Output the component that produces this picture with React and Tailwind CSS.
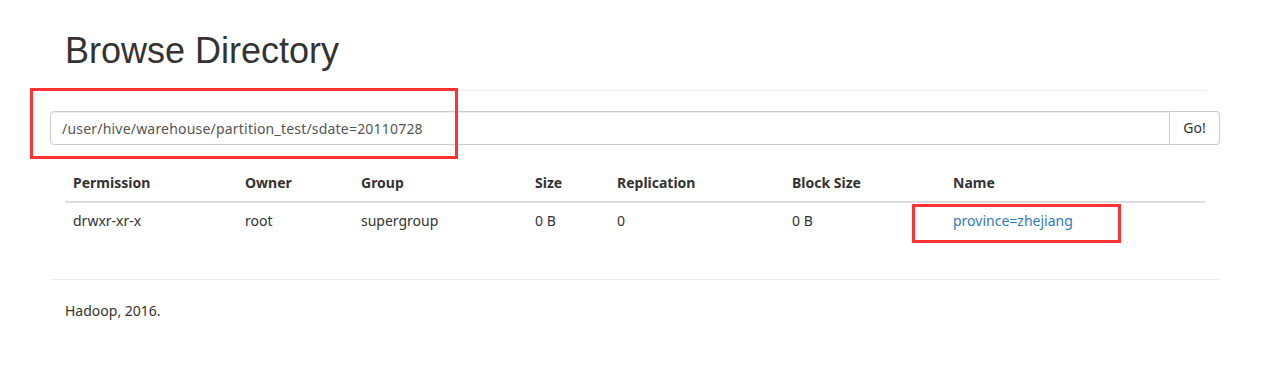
import React from "react";

const cols = [
  { h: "Permission", w: "w-[172px]" },
  { h: "Owner", w: "w-[116px]" },
  { h: "Group", w: "w-[174px]" },
  { h: "Size", w: "w-[82px]" },
  { h: "Replication", w: "w-[175px]" },
  { h: "Block Size", w: "w-[161px]" },
  { h: "Name", w: "" },
];

export default function App() {
  return (
    <div
      className="relative w-[1280px] h-[386px] bg-white text-[#333] text-[14px] leading-[20px]"
      style={{ fontFamily: '"Noto Sans", "Open Sans", sans-serif' }}
    >
      <div className="ml-[50px] w-[1170px]">
        <div className="mx-[15px] pt-[31px] pb-[19px] border-b border-[#eee]">
          <h1
            className="text-[36px] leading-[40px] font-normal text-[#333]"
            style={{ fontFamily: '"Liberation Sans", Arial, sans-serif' }}
          >
            Browse Directory
          </h1>
        </div>
        <div className="mt-[20px] flex h-[34px]">
          <input
            readOnly
            value="/user/hive/warehouse/partition_test/sdate=20110728"
            className="flex-1 h-[34px] border border-[#ccc] rounded-l-[4px] px-[11px] text-[14px] tracking-[0.2px] text-[#555] outline-none shadow-[inset_0_1px_1px_rgba(0,0,0,0.075)]"
            style={{ fontFamily: '"Noto Sans", "Open Sans", sans-serif' }}
          />
          <button className="w-[50px] h-[34px] border border-l-0 border-[#ccc] rounded-r-[4px] bg-white text-[14px] text-[#333]">
            Go!
          </button>
        </div>
        <div className="mx-[15px] mt-[20px]">
          <table className="w-full border-collapse text-left">
            <thead>
              <tr>
                {cols.map((c) => (
                  <th
                    key={c.h}
                    className={`${c.w} px-[8px] py-[8px] font-bold border-b-2 border-[#ddd] align-bottom`}
                  >
                    {c.h}
                  </th>
                ))}
              </tr>
            </thead>
            <tbody>
              <tr>
                <td className="px-[8px] py-[8px]">drwxr-xr-x</td>
                <td className="px-[8px] py-[8px]">root</td>
                <td className="px-[8px] py-[8px]">supergroup</td>
                <td className="px-[8px] py-[8px]">0 B</td>
                <td className="px-[8px] py-[8px]">0</td>
                <td className="px-[8px] py-[8px]">0 B</td>
                <td className="px-[8px] py-[8px]">
                  <a href="#" className="text-[#337ab7]">
                    province=zhejiang
                  </a>
                </td>
              </tr>
            </tbody>
          </table>
        </div>
        <hr className="mt-[40px] border-t border-[#eee]" />
        <div className="mx-[15px] mt-[21px]">Hadoop, 2016.</div>
      </div>

      <div className="absolute left-[30px] top-[88px] w-[428px] h-[71px] border-[3px] border-[#ff3333] pointer-events-none" />
      <div className="absolute left-[912px] top-[204px] w-[209px] h-[39px] border-[3px] border-[#ff3333] pointer-events-none" />
    </div>
  );
}
